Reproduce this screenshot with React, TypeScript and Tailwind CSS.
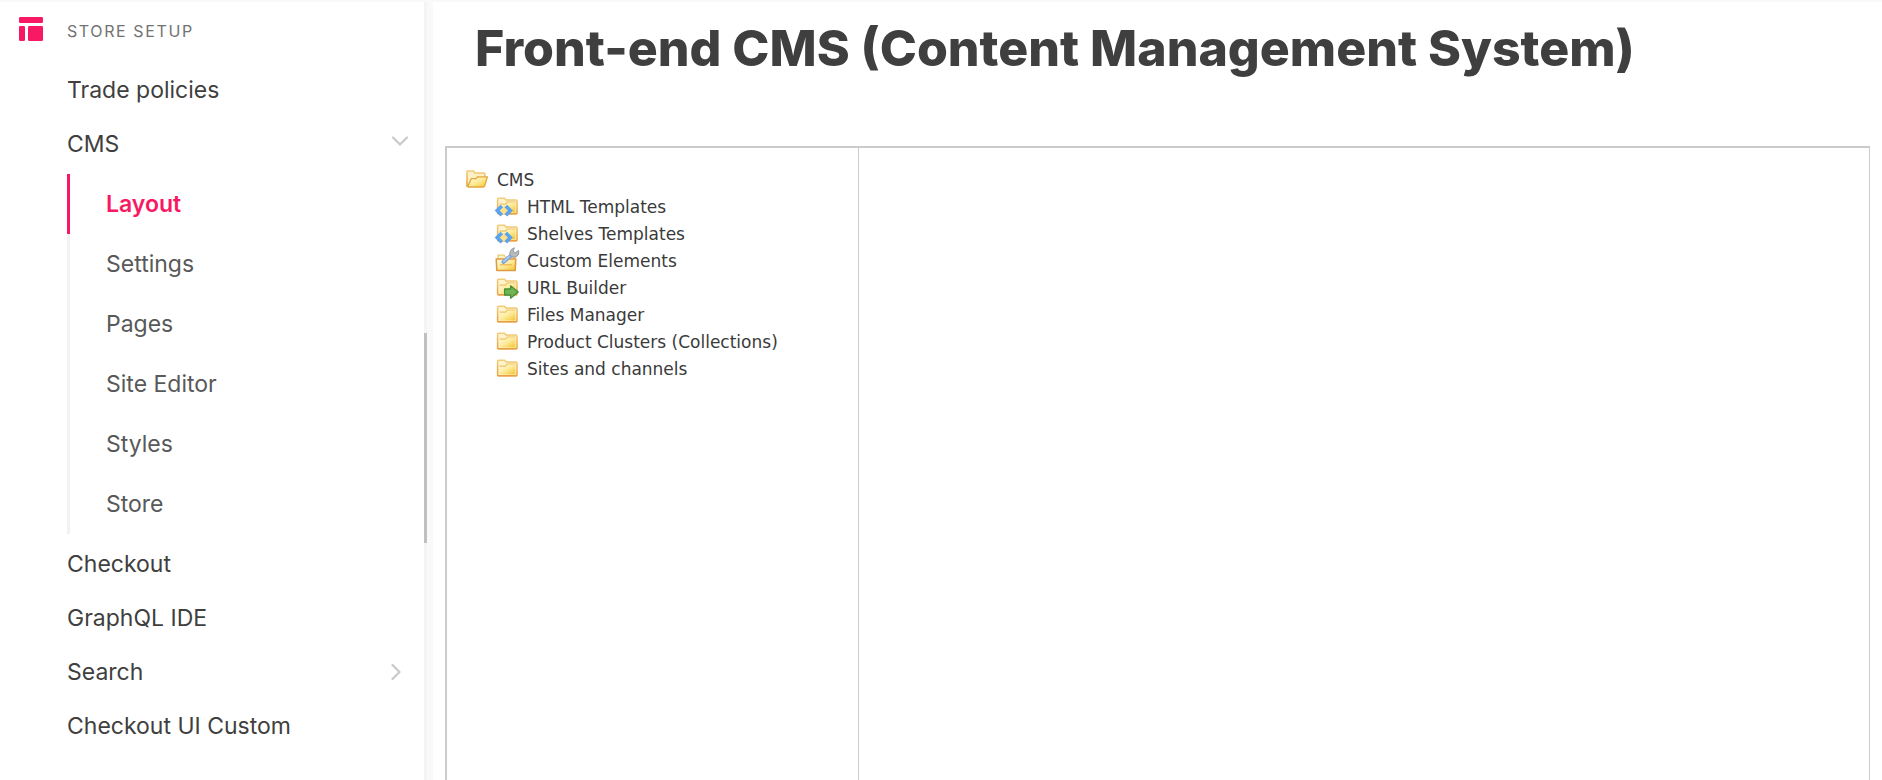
import { ChevronDown, ChevronRight } from "lucide-react";
import type { ReactNode } from "react";

const subItems = ["Layout", "Settings", "Pages", "Site Editor", "Styles", "Store"];

type TreeIcon = "open" | "code" | "tool" | "arrow" | "folder";

const tree: { label: string; icon: TreeIcon }[] = [
  { label: "HTML Templates", icon: "code" },
  { label: "Shelves Templates", icon: "code" },
  { label: "Custom Elements", icon: "tool" },
  { label: "URL Builder", icon: "arrow" },
  { label: "Files Manager", icon: "folder" },
  { label: "Product Clusters (Collections)", icon: "folder" },
  { label: "Sites and channels", icon: "folder" },
];

function Gradients() {
  return (
    <svg width="0" height="0" className="absolute" aria-hidden="true">
      <defs>
        <linearGradient id="face" x1="0" y1="0" x2="1" y2="1">
          <stop offset="0" stopColor="#fffbe0" />
          <stop offset="0.5" stopColor="#fdeb9a" />
          <stop offset="1" stopColor="#f3c42c" />
        </linearGradient>
        <linearGradient id="edge" x1="0" y1="0" x2="0" y2="1">
          <stop offset="0" stopColor="#f2cd7c" />
          <stop offset="1" stopColor="#e8a040" />
        </linearGradient>
      </defs>
    </svg>
  );
}

function FolderIcon({ kind }: { kind: TreeIcon }) {
  if (kind === "open") {
    return (
      <svg width="24" height="24" viewBox="0 1 24 24" className="shrink-0" aria-hidden="true">
        <path d="M2 18V3.5Q2 3 2.5 3H8.5L10 5H19Q19.8 5 19.8 6V9L18 18Z" fill="#fdf0c4" stroke="url(#edge)" strokeWidth="1.6" />
        <path d="M2.7 18.6L6.4 10.6H11L12.6 8.8H22.4L19.6 18Q19.2 19 18.2 19H3.4Z" fill="url(#face)" stroke="#e3a73c" strokeWidth="1.3" strokeLinejoin="round" />
      </svg>
    );
  }
  return (
    <svg width="24" height="24" viewBox="0 1 24 24" className="shrink-0 overflow-visible" aria-hidden="true">
      {kind !== "tool" && (
        <g>
          <path d="M2.6 18V4Q2.6 3.2 3.4 3.2H9.6L11 5H21Q22 5 22 6V18Q22 18.8 21 18.8H3.6Q2.6 18.8 2.6 18Z" fill="#fdf3cc" stroke="url(#edge)" strokeWidth="1.5" />
          <path d="M4.4 17.4V9.8H10.8L12.6 7.4H20.4V17.4Z" fill="url(#face)" />
          <path d="M4.6 9.2H10.4L12.2 7H20.4" fill="none" stroke="#efc465" strokeWidth="1.2" />
          <path d="M3 18.7H21.6" stroke="#e9a040" strokeWidth="1.4" />
        </g>
      )}
      {kind === "code" && (
        <g>
          <circle cx="8.8" cy="15.6" r="4" fill="#fce08a" />
          <path d="M6.8 11L2.2 15.6L6.8 20.2M10.8 11L15.4 15.6L10.8 20.2" fill="none" stroke="#5ba3ee" strokeWidth="3.6" />
        </g>
      )}
      {kind === "tool" && (
        <g>
          <path d="M3 11V6.2H9L10.4 8H20V12Z" fill="#fdf0c4" stroke="#eec878" strokeWidth="1.2" />
          <path d="M1.2 10H20.8L20.2 21.4H1.8Z" fill="url(#face)" stroke="#dd9a40" strokeWidth="1.5" strokeLinejoin="round" />
          <path d="M5 15.8H17" stroke="#edb84c" strokeWidth="1.2" />
          <path d="M8.4 13L16.4 6.2" stroke="#7ba6e4" strokeWidth="3.8" strokeLinecap="round" />
          <path d="M8.8 12.4L14.4 7.6" stroke="#b4cef4" strokeWidth="1.4" strokeLinecap="round" />
          <path d="M19.4 -1.2L18 2.2L20.2 3.8L23.6 1.4Q24.8 5.4 21.6 7.6Q19 8.8 17 7.8L14.8 5.6Q14.4 0.6 19.4 -1.2Z" fill="#b6b9bf" stroke="#8f939b" strokeWidth="0.9" />
        </g>
      )}
      {kind === "arrow" && (
        <path d="M9.6 13H15.6V9.8L23.2 16L15.6 22.2V19H9.6Z" fill="#6fb552" stroke="#458f3c" strokeWidth="1.3" strokeLinejoin="round" />
      )}
    </svg>
  );
}

function NavRow({ label, children }: { label: string; children?: ReactNode }) {
  return (
    <li>
      <a href="#" className="flex h-[54px] items-center justify-between pr-[10px] pl-[67px]">
        {label}
        {children}
      </a>
    </li>
  );
}

export default function App() {
  return (
    <div className="flex min-h-screen flex-col border-t-2 border-[#f9f9f9] bg-white font-['Inter',sans-serif] text-[#3f3f40]">
      <Gradients />
      <div className="flex grow">
        <aside className="flex w-[433px] shrink-0">
          <nav className="grow" aria-label="Store setup">
            <div className="flex h-[61px] items-start pt-[15px] pl-[19px]">
              <svg width="24" height="24" viewBox="0 0 24 24" fill="#f71963" aria-hidden="true">
                <rect width="24" height="6" rx="1.2" />
                <rect y="9" width="6" height="15" rx="1.2" />
                <rect x="9" y="9" width="15" height="15" rx="1.2" />
              </svg>
              <h2 className="pl-6 text-base leading-7 tracking-widest text-[#727273]">STORE SETUP</h2>
            </div>
            <ul className="text-[23px]">
              <NavRow label="Trade policies" />
              <NavRow label="CMS">
                <span className="pb-1.5">
                  <ChevronDown size={28} strokeWidth={2} color="#cacbcc" />
                </span>
              </NavRow>
              <li className="py-[3px] pl-[67px]">
                <ul className="text-[#585959]">
                  {subItems.map((item, i) => (
                    <li key={item}>
                      <a
                        href="#"
                        aria-current={i === 0 ? "page" : undefined}
                        className={
                          i === 0
                            ? "flex h-[60px] items-center border-l-3 border-[#f71963] pl-9 font-semibold text-[#f71963]"
                            : "flex h-[60px] items-center border-l-3 border-[#f2f2f3] pl-9"
                        }
                      >
                        {item}
                      </a>
                    </li>
                  ))}
                </ul>
              </li>
              <NavRow label="Checkout" />
              <NavRow label="GraphQL IDE" />
              <NavRow label="Search">
                <span className="pr-1">
                  <ChevronRight size={28} strokeWidth={2} color="#cacbcc" />
                </span>
              </NavRow>
              <NavRow label="Checkout UI Custom" />
            </ul>
          </nav>
          <div className="flex w-[3px] flex-col bg-[#f2f4f5]">
            <div className="grow-[331]" />
            <div className="grow-[210] bg-[#bfc0c2]" />
            <div className="grow-[237]" />
          </div>
          <div className="w-[6px] bg-[#f9f9f9]" />
        </aside>
        <main className="flex min-w-0 grow flex-col pr-3 pl-3">
          <h1 className="h-36 pt-4 pl-[30px] text-[50px] leading-[60px] font-extrabold">
            Front-end CMS (Content Management System)
          </h1>
          <div className="flex grow border-t-2 border-r border-l-2 border-[#cbcbcb]">
            <section className="w-[412px] shrink-0 border-r border-[#cbcbcb] pt-[19px] pl-[18px] font-['DejaVu_Sans',sans-serif] text-[17px] text-[#3a3a3a]">
              <ul>
                <li>
                  <a href="#" className="flex h-[27px] items-center gap-2">
                    <FolderIcon kind="open" />
                    CMS
                  </a>
                  <ul className="pl-[30px]">
                    {tree.map(({ label, icon }) => (
                      <li key={label}>
                        <a href="#" className="flex h-[27px] items-center gap-2">
                          <FolderIcon kind={icon} />
                          {label}
                        </a>
                      </li>
                    ))}
                  </ul>
                </li>
              </ul>
            </section>
            <section className="grow" aria-label="Content" />
          </div>
        </main>
      </div>
    </div>
  );
}
